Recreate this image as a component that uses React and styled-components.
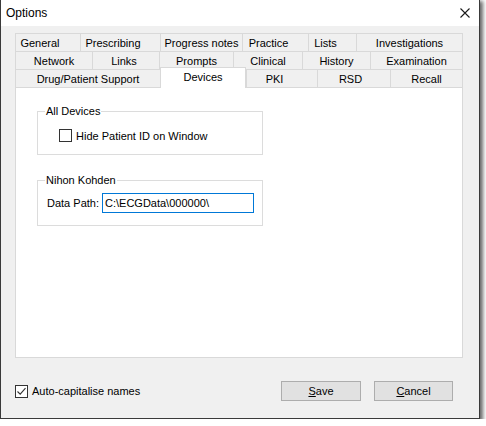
import React from 'react'
import styled, { createGlobalStyle } from 'styled-components'

const GlobalStyle = createGlobalStyle`
    body {
        margin: 0;
        background: #ffffff;
        font-family: "Liberation Sans", Arial, sans-serif;
        font-size: 11px;
        color: #000000;
    }
`

const Window = styled.div`
    box-sizing: border-box;
    width: 480px;
    height: 419px;
    display: flex;
    flex-direction: column;
    background: #f0f0f0;
    border: 1px solid #3a3a3a;
    border-top: none;
    box-shadow: 2px 2px 4px 1px rgba(0, 0, 0, 0.6);
`

const TitleBar = styled.div`
    height: 26px;
    flex: none;
    display: flex;
    align-items: center;
    justify-content: space-between;
    padding: 0 9px 0 5px;
    background: #ffffff;
    font-size: 12px;
`

const Body = styled.div`
    flex: 1;
    display: flex;
    flex-direction: column;
    padding: 7px 16px 0 14px;
`

const TabStrip = styled.div`
    display: flex;
    flex-direction: column;
`

const TabRow = styled.div`
    display: flex;
    align-items: flex-start;
    height: 18px;
`

const Tab = styled.div`
    box-sizing: border-box;
    width: ${p => p.$w}px;
    height: ${p => (p.$active ? 21 : 18)}px;
    margin-top: ${p => (p.$active ? -2 : 0)}px;
    padding-right: ${p => p.$pr || 0}px;
    display: flex;
    align-items: center;
    justify-content: center;
    background: ${p => (p.$active ? '#ffffff' : '#f0f0f0')};
    border-top: 1px solid #d9d9d9;
    border-left: 1px solid #d9d9d9;
    border-right: ${p => (p.$last || p.$active ? '1px solid #d9d9d9' : 'none')};
    position: ${p => (p.$active ? 'relative' : 'static')};
    z-index: ${p => (p.$active ? 1 : 0)};
    padding-bottom: ${p => (p.$active ? 3 : 0)}px;
    white-space: nowrap;
`

const Panel = styled.div`
    box-sizing: border-box;
    height: 271px;
    display: flex;
    flex-direction: column;
    gap: 18px;
    padding: 16px 0 0 21px;
    background: #ffffff;
    border: 1px solid #d9d9d9;
`

const Group = styled.fieldset`
    box-sizing: border-box;
    width: 226px;
    margin: 0;
    padding: ${p => p.$pt}px 0 12px 0;
    border: 1px solid #dcdcdc;
`

const Legend = styled.legend`
    margin-left: 7px;
    padding: 0 1px;
    line-height: 14px;
`

const CheckRow = styled.label`
    display: flex;
    align-items: center;
    gap: 4px;
    height: 13px;
    margin-left: ${p => p.$indent || 0}px;
`

const Box = styled.span`
    box-sizing: border-box;
    width: 13px;
    height: 13px;
    display: inline-flex;
    align-items: center;
    justify-content: center;
    border: 1px solid #333333;
    background: #ffffff;
`

const FieldRow = styled.div`
    display: flex;
    align-items: center;
    gap: 3px;
    margin-left: 9px;
`

const PathInput = styled.input`
    box-sizing: border-box;
    width: 152px;
    height: 20px;
    padding: 0 2px;
    border: 1px solid #0078d7;
    outline: none;
    font-family: inherit;
    font-size: 11px;
    color: #000000;
`

const Footer = styled.div`
    display: flex;
    align-items: center;
    padding: 23px 10px 0 0;
`

const Spacer = styled.div`
    flex: 1;
`

const Button = styled.button`
    box-sizing: border-box;
    width: ${p => p.$w}px;
    height: 20px;
    margin-left: ${p => p.$ml || 0}px;
    padding: 0;
    background: #e1e1e1;
    border: 1px solid #adadad;
    font-family: inherit;
    font-size: 11px;
    color: #000000;
`

const CloseIcon = () => (
    <svg width="10" height="10" viewBox="0 0 10 10">
        <path d="M0.5 0.5 L9.5 9.5 M9.5 0.5 L0.5 9.5" stroke="#1a1a1a" strokeWidth="1.1" fill="none" />
    </svg>
)

const Tick = () => (
    <svg width="11" height="11" viewBox="0 0 11 11">
        <path d="M1.5 5.5 L4.2 8.2 L9.5 2.2" stroke="#333333" strokeWidth="1.1" fill="none" />
    </svg>
)

const rows = [
    [
        { label: 'General', w: 65, pr: 16 },
        { label: 'Prescribing', w: 80, pr: 15 },
        { label: 'Progress notes', w: 82 },
        { label: 'Practice', w: 66, pr: 14 },
        { label: 'Lists', w: 48, pr: 14 },
        { label: 'Investigations', w: 107 },
    ],
    [
        { label: 'Network', w: 77 },
        { label: 'Links', w: 67, pr: 4 },
        { label: 'Prompts', w: 74 },
        { label: 'Clinical', w: 69 },
        { label: 'History', w: 68 },
        { label: 'Examination', w: 93 },
    ],
    [
        { label: 'Drug/Patient Support', w: 145 },
        { label: 'Devices', w: 86, active: true },
        { label: 'PKI', w: 71, pr: 15 },
        { label: 'RSD', w: 73, pr: 7 },
        { label: 'Recall', w: 73 },
    ],
]

const App = () => {
    return (
        <>
            <GlobalStyle />
            <Window>
                <TitleBar>
                    <span>Options</span>
                    <CloseIcon />
                </TitleBar>
                <Body>
                    <TabStrip>
                        {rows.map((row, i) => (
                            <TabRow key={i}>
                                {row.map((t, j) => (
                                    <Tab
                                        key={t.label}
                                        $w={t.w}
                                        $pr={t.pr}
                                        $active={t.active}
                                        $last={j === row.length - 1}
                                    >
                                        {t.label}
                                    </Tab>
                                ))}
                            </TabRow>
                        ))}
                    </TabStrip>
                    <Panel>
                        <Group $pt={11}>
                            <Legend>All Devices</Legend>
                            <CheckRow $indent={21}>
                                <Box />
                                Hide Patient ID on Window
                            </CheckRow>
                        </Group>
                        <Group $pt={6}>
                            <Legend>Nihon Kohden</Legend>
                            <FieldRow>
                                Data Path:
                                <PathInput defaultValue={'C:\\ECGData\\000000\\'} />
                            </FieldRow>
                        </Group>
                    </Panel>
                    <Footer>
                        <CheckRow>
                            <Box>
                                <Tick />
                            </Box>
                            Auto-capitalise names
                        </CheckRow>
                        <Spacer />
                        <Button $w={80}>
                            <u>S</u>ave
                        </Button>
                        <Button $w={79} $ml={13}>
                            <u>C</u>ancel
                        </Button>
                    </Footer>
                </Body>
            </Window>
        </>
    )
}

export default App
